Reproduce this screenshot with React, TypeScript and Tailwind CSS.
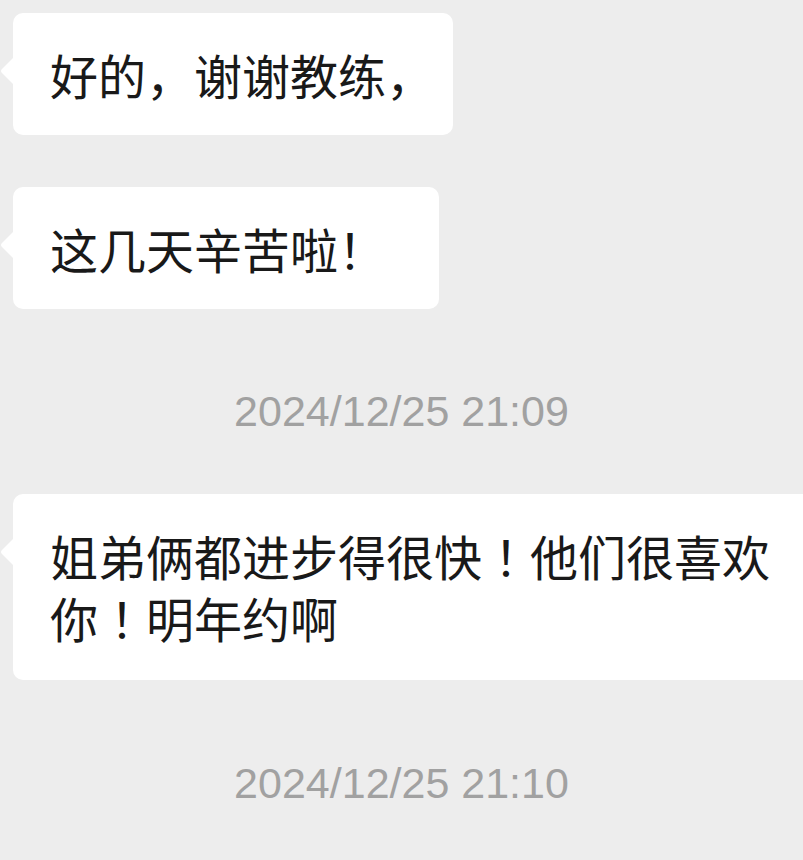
import type { ReactNode } from "react";

function Tail() {
  return (
    <svg
      aria-hidden="true"
      className="absolute left-[-13px] top-[44px] h-[28px] w-[14px]"
      viewBox="0 0 14 28"
    >
      <path d="M14 0 L14 28 L2 16 Q0 14 2 12 Z" fill="#ffffff" />
    </svg>
  );
}

function Bubble({ children, className }: { children: ReactNode; className?: string }) {
  return (
    <div
      className={
        "relative ml-[13px] rounded-[10px] bg-white pl-[37px] text-[48px] leading-[62px] text-[#191919] " +
        (className ?? "")
      }
    >
      <Tail />
      {children}
    </div>
  );
}

function Stamp({ text }: { text: string }) {
  return (
    <div className="flex h-[50px] items-center justify-center font-['Liberation_Sans',Arial,sans-serif] text-[43px] text-[#a1a1a1]">
      {text}
    </div>
  );
}

// centred full-width bang, as in the reference
function Bang() {
  return <span className="font-['Noto_Sans_CJK_TC',sans-serif]">！</span>;
}

export default function App() {
  return (
    <div className="h-[860px] w-[803px] overflow-hidden bg-[#ededed] pt-[13px] font-['Noto_Sans_CJK_SC','Noto_Sans',sans-serif]">
      <Bubble className="w-[440px] whitespace-nowrap py-[30px]">好的，谢谢教练，</Bubble>
      <Bubble className="mt-[52px] w-[426px] whitespace-nowrap py-[30px]">这几天辛苦啦！</Bubble>
      <div className="mt-[77px]">
        <Stamp text="2024/12/25 21:09" />
      </div>
      <Bubble className="mt-[58px] w-[830px] whitespace-nowrap pb-[32px] pt-[30px]">
        姐弟俩都进步得很快<Bang />他们很喜欢
        <br />
        你<Bang />明年约啊
      </Bubble>
      <div className="mt-[78px]">
        <Stamp text="2024/12/25 21:10" />
      </div>
    </div>
  );
}
